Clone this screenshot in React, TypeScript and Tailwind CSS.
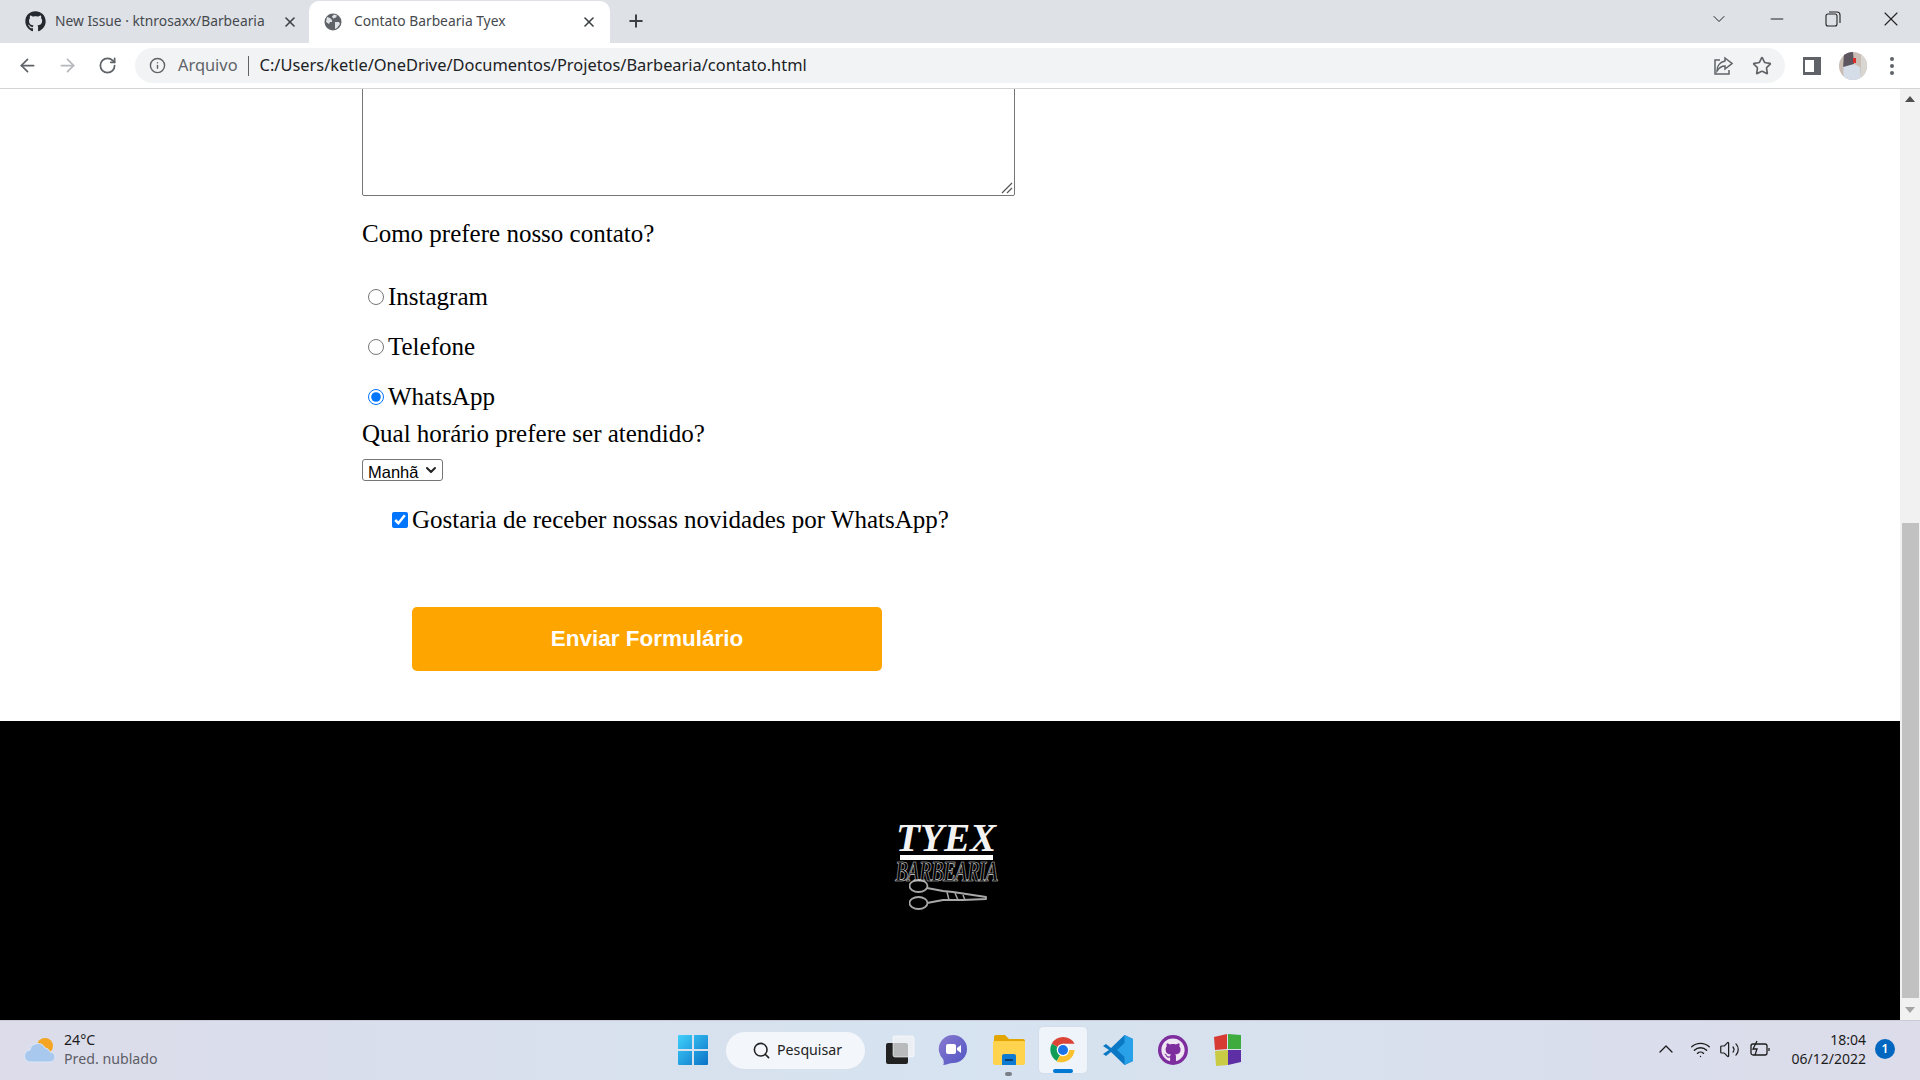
import { ArrowLeft, ArrowRight, ChevronDown, ChevronUp, Info, Minus, Plus, RotateCw, Star, X, Search, Wifi, Volume2 } from "lucide-react";
import { FaGithub } from "react-icons/fa";

function Globe() {
  return (
    <svg width="18" height="18" viewBox="0 0 18 18">
      <circle cx="9" cy="9" r="8.5" fill="#5f6368" />
      <path d="M3 4l3 1 2 2 0 2-2 0-1 2-3-2zM10 1.5l3 1-1 2-3 1-1-2zM11 9l4 0 1 2-3 4-2 1 0-4z" fill="#dfe1e5" />
    </svg>
  );
}

function ChromeIcon() {
  return (
    <svg width="30" height="30" viewBox="0 0 48 48">
      <path d="M24 24 6 14A21 21 0 0 1 42.500 14H24z" fill="#db4437" />
      <path d="M24 24 14 41.500A21 21 0 0 1 6 14z" fill="#0f9d58" />
      <path d="M24 24h18.500A21 21 0 0 1 14 42.300z" fill="#fbc02d" />
      <circle cx="24" cy="24" r="10" fill="#fff" />
      <circle cx="24" cy="24" r="8" fill="#1a73e8" />
    </svg>
  );
}

function TaskbarIcons() {
  return (
    <div className="flex items-center -ml-[2px] mt-[2px]">
      {/* windows */}
      <svg width="30" height="30" viewBox="0 0 30 30" className="mr-[18px]">
        <defs>
          <linearGradient id="win" x1="0" y1="0" x2="1" y2="1">
            <stop offset="0" stopColor="#3fd0fb" />
            <stop offset="1" stopColor="#0a72c6" />
          </linearGradient>
        </defs>
        <path d="M0 1a1 1 0 0 1 1-1h13v14H0zM16 0h13a1 1 0 0 1 1 1v13H16zM0 16h14v14H1a1 1 0 0 1-1-1zM16 16h14v13a1 1 0 0 1-1 1H16z" fill="url(#win)" />
      </svg>
      <div className="w-[139px] h-[37px] rounded-full bg-[#f3f6fa] flex items-center pl-[26px] gap-[6px] text-[14.200px] text-[#222] mr-[19px]">
        <Search size={19} strokeWidth={2} className="text-[#222]" />
        <span>Pesquisar</span>
      </div>
      {/* task view */}
      <svg width="32" height="32" viewBox="0 0 32 32" className="mr-[22px]">
        <rect x="2" y="9" width="22" height="21" rx="2" fill="#222" />
        <rect x="9" y="2" width="21" height="21" rx="2" fill="#f4f5f7" fillOpacity="0.72" stroke="#fff" strokeOpacity="0.6" />
      </svg>
      {/* chat */}
      <svg width="30" height="32" viewBox="0 0 30 32" className="mr-[25px]">
        <defs>
          <linearGradient id="chat" x1="0" y1="0" x2="1" y2="1">
            <stop offset="0" stopColor="#8a79cf" />
            <stop offset="1" stopColor="#4f56c4" />
          </linearGradient>
        </defs>
        <path d="M15 1a14 14 0 0 1 0 28c-3 0-7 2-10 2 1-1 1-4 0-6A14 14 0 0 1 15 1z" fill="url(#chat)" />
        <rect x="8" y="10" width="10" height="10" rx="2" fill="#fff" />
        <path d="M19 14l4-3v8l-4-3z" fill="#fff" />
      </svg>
      {/* folder */}
      <div className="relative mr-[14px]">
        <svg width="32" height="30" viewBox="0 0 32 30">
          <path d="M1 2a2 2 0 0 1 2-2h9l4 4h14a2 2 0 0 1 2 2v4H1z" fill="#e3a600" />
          <path d="M0 6h31a1 1 0 0 1 1 1v21a2 2 0 0 1-2 2H2a2 2 0 0 1-2-2z" fill="#ffd34e" />
          <path d="M9 21a2 2 0 0 1 2-2h10a2 2 0 0 1 2 2v9H9z" fill="#0c7bd1" />
          <rect x="12" y="24" width="8" height="2" fill="#0a3f73" />
        </svg>
        <span className="absolute left-[12px] top-[37px] w-[7px] h-[4px] rounded-full bg-[#7b8088]" />
      </div>
      {/* chrome, open */}
      <div className="relative w-[48px] h-[46px] rounded-[4px] bg-[#eef4f9] shadow-[0_0_1px_#b9c4cf] flex items-center justify-center mr-[16px]">
        <ChromeIcon />
        <span className="absolute left-[14px] bottom-0 w-[20px] h-[4px] rounded-full bg-[#0078d4]" />
      </div>
      {/* vscode */}
      <svg width="30" height="30" viewBox="0 0 30 30" className="mr-[25px]">
        <path d="M21.500 0 30 4v22l-8.500 4L8 17l-5 4-3-2 6-4-6-4 3-2 5 4z" fill="#0a78c5" />
        <path d="M21.500 0 30 4v22l-8.500 4zM21.500 8 14 15l7.500 7z" fill="#28a1e8" />
      </svg>
      {/* github desktop */}
      <div className="w-[30px] h-[30px] rounded-full bg-[#7e2d9e] flex items-center justify-center mr-[25px]">
        <FaGithub size={24} className="text-[#efe6f4]" />
      </div>
      {/* color app */}
      <svg width="29" height="32" viewBox="0 0 29 32">
        <path d="M1 3l13-3v15L2 16z" fill="#d63a33" />
        <path d="M15 0l13 1v14l-13 0z" fill="#3dab3e" />
        <path d="M2 17l13-1v15L3 32z" fill="#c9cb44" />
        <path d="M15 16h13v12l-13 3z" fill="#5e2ea5" />
      </svg>
    </div>
  );
}

export default function App() {
  return (
    <div className="w-[1920px] h-[1080px] flex flex-col overflow-hidden bg-white font-['Noto_Sans',sans-serif]">
      {/* tab strip */}
      <div className="h-[43px] shrink-0 bg-[#dee1e6] flex items-end text-[#45494e] text-[13.800px]">
        <div className="w-[309px] h-[42px] flex items-center pl-[25px] pb-[1px]">
          <FaGithub size={21} className="text-[#24292f] shrink-0" />
          <span className="ml-[9px] w-[208px] whitespace-nowrap">New Issue · ktnrosaxx/Barbearia</span>
          <X size={16} strokeWidth={2.4} className="ml-[19px] text-[#3c4043]" />
        </div>
        <div className="w-[301px] h-[42px] bg-white rounded-t-[10px] flex items-center pl-[15px] pb-[1px]">
          <Globe />
          <span className="ml-[12px] w-[227px] whitespace-nowrap">Contato Barbearia Tyex</span>
          <X size={16} strokeWidth={2.4} className="text-[#3c4043]" />
        </div>
        <Plus size={20} strokeWidth={2.4} className="ml-[16px] mb-[12px] text-[#3c4043]" />
        <div className="flex-1" />
        <div className="flex items-center h-full pb-[5px] text-[#222]">
          <ChevronDown size={20} strokeWidth={1.2} className="mr-[38px]" />
          <Minus size={20} strokeWidth={1.2} className="mr-[38px]" />
          <svg width="16" height="16" viewBox="0 0 16 16" fill="none" stroke="#222" strokeWidth="1.100" className="mr-[38px]">
            <rect x="1" y="3" width="11" height="12" rx="2" />
            <path d="M4 1h8a3 3 0 0 1 3 3v8" />
          </svg>
          <X size={24} strokeWidth={1.1} className="mr-[17px]" />
        </div>
      </div>

      {/* toolbar */}
      <div className="h-[46px] shrink-0 bg-white border-b border-[#d3d4d6] flex items-center text-[#5f6368]">
        <ArrowLeft size={21} strokeWidth={2} className="ml-[17px]" />
        <ArrowRight size={21} strokeWidth={2} className="ml-[19px] text-[#b5b8bc]" />
        <RotateCw size={19} strokeWidth={2.2} className="ml-[20px]" />
        <div className="ml-[18px] w-[1650px] h-[35px] rounded-full bg-[#f1f3f4] flex items-center text-[16.400px] pl-[14px]">
          <Info size={17} strokeWidth={2} />
          <span className="ml-[12px] text-[#5f6368]">Arquivo</span>
          <span className="ml-[10px] w-[1px] h-[20px] bg-[#5f6368]" />
          <span className="ml-[11px] text-[#202124] whitespace-nowrap">C:/Users/ketle/OneDrive/Documentos/Projetos/Barbearia/contato.html</span>
          <div className="flex-1" />
          <svg width="20" height="20" viewBox="0 0 20 20" fill="none" stroke="#5f6368" strokeWidth="1.500" className="mr-[19px]">
            <path d="M7 4H2v14h14v-4" />
            <path d="M12 2l7 5.500-7 5.500V10c-4 0-6 2-8 5 0-5 3-9 8-10z" />
          </svg>
          <Star size={20} strokeWidth={2} className="mr-[13px]" />
        </div>
        <svg width="18" height="18" viewBox="0 0 18 18" className="ml-[18px]">
          <rect width="18" height="18" fill="#5f6368" />
          <rect x="2" y="3" width="9" height="12" fill="#fff" />
        </svg>
        <svg width="28" height="28" viewBox="0 0 28 28" className="ml-[18px]">
          <defs>
            <clipPath id="av">
              <circle cx="14" cy="14" r="14" />
            </clipPath>
          </defs>
          <g clipPath="url(#av)">
            <rect width="28" height="28" fill="#c9bdb6" />
            <path d="M5 0h9l1 12-2 6H4z" fill="#5d5560" />
            <path d="M4 15l11-3 6 3 1 13H5z" fill="#d5dde9" />
            <rect x="14" y="6" width="3" height="5" fill="#e02b2b" />
            <rect x="22" y="0" width="6" height="28" fill="#d8d6d1" />
          </g>
        </svg>
        <div className="ml-[23px] flex flex-col gap-[3px]">
          <span className="w-[4px] h-[4px] rounded-full bg-[#5f6368]" />
          <span className="w-[4px] h-[4px] rounded-full bg-[#5f6368]" />
          <span className="w-[4px] h-[4px] rounded-full bg-[#5f6368]" />
        </div>
      </div>

      {/* page + scrollbar */}
      <div className="flex-1 min-h-0 flex">
        <div className="flex-1 min-w-0 flex flex-col overflow-hidden font-['Liberation_Serif',serif] text-[25px] text-black">
          <div className="h-[632px] shrink-0 pl-[362px]">
            <div className="relative w-[653px] h-[137px] -mt-[30px]">
              <textarea className="block w-full h-full border border-[#767676] rounded-[2px] bg-white resize-none" readOnly />
              <svg width="12" height="12" viewBox="0 0 12 12" stroke="#555" strokeWidth="1.200" className="absolute right-[2px] bottom-[2px]">
                <path d="M1 11 11 1M6 11l5-5" />
              </svg>
            </div>
            <p className="mt-[24px] leading-[28px]">Como prefere nosso contato?</p>
            <label className="mt-[35px] pl-[6px] h-[28px] flex items-center">
              <input type="radio" name="contato" className="w-4 h-4 mr-[4px]" readOnly />
              Instagram
            </label>
            <label className="mt-[22px] pl-[6px] h-[28px] flex items-center">
              <input type="radio" name="contato" className="w-4 h-4 mr-[4px]" readOnly />
              Telefone
            </label>
            <label className="mt-[22px] pl-[6px] h-[28px] flex items-center">
              <input type="radio" name="contato" className="w-4 h-4 mr-[4px]" defaultChecked />
              WhatsApp
            </label>
            <p className="mt-[9px] leading-[28px]">Qual horário prefere ser atendido?</p>
            <div className="relative mt-[11px] w-[81px] h-[22px]">
              <select className="block appearance-none w-full h-full pl-[5px] pb-[2px] border border-[#767676] rounded-[3px] bg-white font-['Liberation_Sans',sans-serif] text-[16.500px] text-black" defaultValue="Manhã">
                <option>Manhã</option>
              </select>
              <ChevronDown size={16} strokeWidth={3} className="absolute right-[4px] top-[3px] text-[#222] pointer-events-none" />
            </div>
            <label className="mt-[25px] pl-[30px] h-[28px] flex items-center">
              <input type="checkbox" className="w-4 h-4 mr-[4px]" defaultChecked />
              Gostaria de receber nossas novidades por WhatsApp?
            </label>
            <button className="mt-[73px] ml-[50px] w-[470px] h-[64px] rounded-[5px] bg-[#ffa500] text-white font-bold font-['Liberation_Sans',sans-serif] text-[22.500px]">
              Enviar Formulário
            </button>
          </div>

          {/* footer */}
          <footer className="flex-1 bg-black flex items-center justify-center pb-[8px] pr-[8px]">
            <div className="w-[104px] flex flex-col items-center text-center">
              <span className="font-bold italic text-[40px] leading-[32px] text-[#f2f2f2] scale-x-[0.98] whitespace-nowrap">TYEX</span>
              <span className="w-[93px] h-[5px] bg-white mt-[1px]" />
              <span className="font-bold italic text-[29px] leading-[22px] text-transparent tracking-[-1.500px] whitespace-nowrap scale-x-[0.67] [-webkit-text-stroke:0.7px_#d8d8d8]">BARBEARIA</span>
              <svg width="78" height="32" viewBox="0 0 78 32" fill="none" stroke="#a8a8a8" strokeWidth="1.800" className="ml-[4px] -mt-[3px]">
                <ellipse cx="9.500" cy="7" rx="9" ry="6" />
                <ellipse cx="9.500" cy="24" rx="9" ry="6" />
                <path d="M18 9l16 3 10 1 33 5 0 2-23 1-20 0-16 3" strokeLinejoin="round" />
                <path d="M38 13l2 8M46 14l3 7M54 16l2 5" strokeWidth="1.500" />
              </svg>
            </div>
          </footer>
        </div>

        {/* scrollbar */}
        <div className="w-[20px] shrink-0 bg-[#f1f1f1] flex flex-col items-center">
          <div className="h-[20px] shrink-0 flex items-center justify-center">
            <span className="w-0 h-0 border-x-[5px] border-x-transparent border-b-[6px] border-b-[#505050]" />
          </div>
          <div className="h-[414px] shrink-0" />
          <div className="h-[475px] w-[17px] shrink-0 bg-[#c1c1c1]" />
          <div className="flex-1" />
          <div className="h-[20px] shrink-0 flex items-center justify-center">
            <span className="w-0 h-0 border-x-[5px] border-x-transparent border-t-[6px] border-t-[#a3a3a3]" />
          </div>
        </div>
      </div>

      {/* taskbar */}
      <div className="h-[60px] shrink-0 flex items-center pb-[3px] bg-gradient-to-r from-[#dcdcea] via-[#d6e3f0] to-[#dcdcea] border-t border-[#c9ccd6]">
        <div className="w-[680px] flex items-center pl-[23px]">
          <svg width="33" height="30" viewBox="0 0 33 30">
            <circle cx="22" cy="12" r="8" fill="#f4a622" />
            <path d="M8 28a6 6 0 0 1-1-12 8 8 0 0 1 15-2 6 6 0 0 1 5 4 5 5 0 0 1 0 10z" fill="#a9c8ee" stroke="#dbe8f8" />
          </svg>
          <div className="ml-[8px] text-[14.200px] leading-[19px]">
            <div className="text-[#1c1c1c]">24°C</div>
            <div className="text-[#5d5d66]">Pred. nublado</div>
          </div>
        </div>
        <TaskbarIcons />
        <div className="flex-1" />
        <div className="flex items-center text-[#1c1c1c]">
          <ChevronUp size={24} strokeWidth={1.3} className="mr-[12px]" />
          <Wifi size={21} strokeWidth={1.6} className="mr-[8px]" />
          <Volume2 size={21} strokeWidth={1.4} className="mr-[10px]" />
          <svg width="21" height="18" viewBox="0 0 21 18" fill="none" stroke="#1c1c1c" strokeWidth="1.300" className="mr-[17px]">
            <rect x="1" y="4" width="16" height="11" rx="2" />
            <path d="M19 8v3" />
            <path d="M7 1 3 9h4l-2 6" />
          </svg>
          <div className="text-right text-[14px] leading-[19px] w-[78px]">
            <div>18:04</div>
            <div>06/12/2022</div>
          </div>
          <div className="ml-[9px] mr-[25px] w-[20px] h-[20px] rounded-full bg-[#0067c0] text-white text-[12px] font-semibold flex items-center justify-center">
            1
          </div>
        </div>
      </div>
    </div>
  );
}
